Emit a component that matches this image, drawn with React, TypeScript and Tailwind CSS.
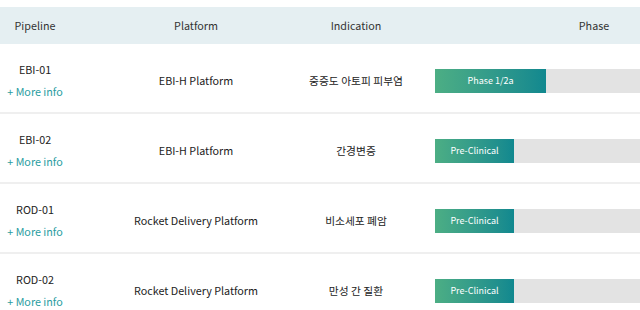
const rows = [
  { id: 'EBI-01', platform: 'EBI-H Platform', indication: '중증도 아토피 피부염', phase: 'Phase 1/2a', width: 111 },
  { id: 'EBI-02', platform: 'EBI-H Platform', indication: '간경변증', phase: 'Pre-Clinical', width: 79 },
  { id: 'ROD-01', platform: 'Rocket Delivery Platform', indication: '비소세포 폐암', phase: 'Pre-Clinical', width: 79 },
  { id: 'ROD-02', platform: 'Rocket Delivery Platform', indication: '만성 간 질환', phase: 'Pre-Clinical', width: 79 },
]

const font = { fontFamily: '"Noto Sans CJK KR", "Noto Sans", sans-serif' }

export default function App() {
  return (
    <div className="w-[640px] h-[310px] overflow-hidden bg-white pt-[7px] text-[#222]" style={font}>
      <div className="w-[798px]">
        <div className="flex h-[37px] items-center bg-[#e5eff2] pt-[1px] text-[10.75px] text-[#333]">
          <div className="flex w-[70px] justify-center">Pipeline</div>
          <div className="flex w-[252px] justify-center">Platform</div>
          <div className="flex w-[68px] justify-center whitespace-nowrap">Indication</div>
          <div className="flex flex-1 justify-center pl-[45px] pr-[45px]">Phase</div>
        </div>

        {rows.map((r) => (
          <div key={r.id} className="flex h-[70px] items-center border-b-2 border-[#efefef] pt-[6px] text-[10.75px]">
            <div className="flex w-[70px] flex-col items-center">
              <span className="leading-[22px]">{r.id}</span>
              <span className="whitespace-nowrap leading-[22px] text-[#2a9d9f]">+ More info</span>
            </div>
            <div className="flex w-[252px] justify-center whitespace-nowrap">{r.platform}</div>
            <div className="flex w-[68px] justify-center whitespace-nowrap">{r.indication}</div>
            <div className="flex flex-1 pl-[45px] pr-[45px]">
              <div className="flex h-[24px] w-full bg-[#e3e3e3]">
                <div
                  className="flex h-full items-center justify-center bg-gradient-to-r from-[#4cae84] to-[#10888f] text-[9px] text-white"
                  style={{ width: r.width }}
                >
                  {r.phase}
                </div>
              </div>
            </div>
          </div>
        ))}
      </div>
    </div>
  )
}
